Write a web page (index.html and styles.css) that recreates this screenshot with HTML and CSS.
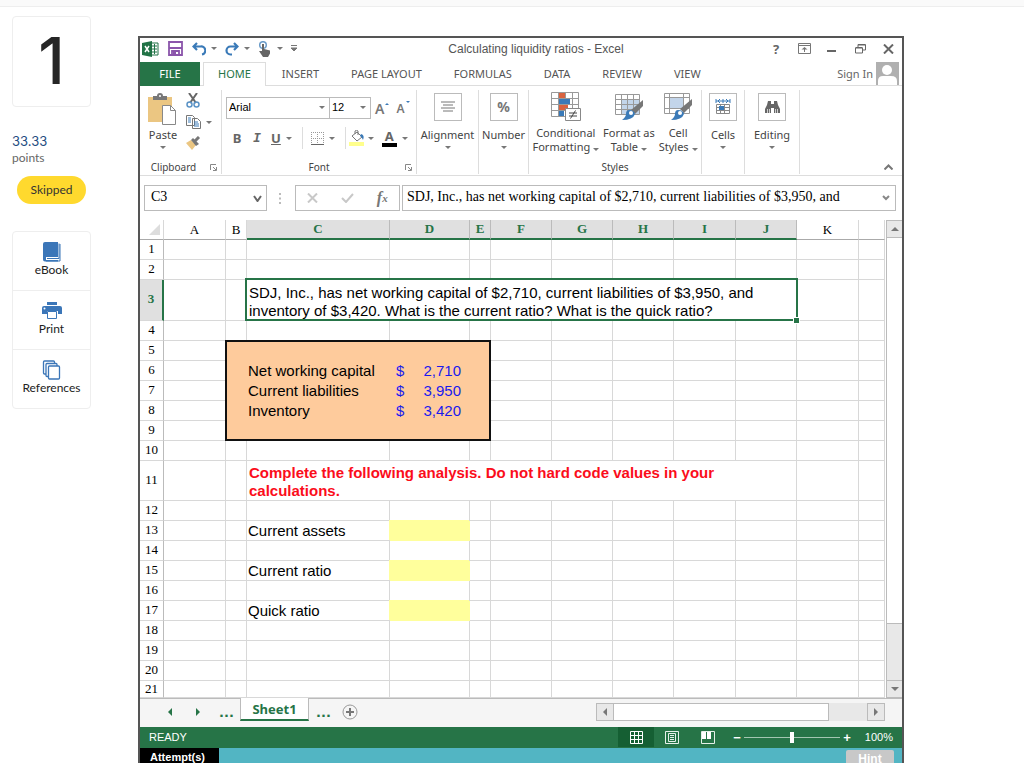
FILE: index.html
```html
<!DOCTYPE html>
<html lang="en">
<head>
  <meta charset="UTF-8">
  <meta name="viewport" content="width=device-width, initial-scale=1.0">
  <title>Calculating liquidity ratios</title>
  <link rel="stylesheet" href="styles.css">
</head>
<body>

<div class="top-strip"></div>

<div class="page">
  <aside class="sidebar">
    <div class="question-number">1</div>
    <div class="score">33.33</div>
    <div class="score-label">points</div>
    <div class="status-pill">Skipped</div>
    <nav class="tools">
      <a href="#ebook">
        <svg width="20" height="20" viewBox="0 0 20 20"><path d="M3 0h13v15H4v3h12v1.500H3A2 2 0 0 1 1 17.500V2a2 2 0 0 1 2-2z" fill="#3b76b8"/><path d="M5 16.500h12V1.500M18 2v17H4" fill="none" stroke="#3b76b8"/></svg>
        <span>eBook</span>
      </a>
      <a href="#print">
        <svg width="20" height="20" viewBox="0 0 20 20"><path d="M5 1h10v3H5zM2 5h16a2 2 0 0 1 2 2v6h-4v-3H5v3H0V7a2 2 0 0 1 2-2z" fill="#3b76b8"/><path d="M5.500 10.500h9v7h-9z" fill="#fff" stroke="#3b76b8"/><circle cx="2.500" cy="7.500" r="1" fill="#fff"/></svg>
        <span>Print</span>
      </a>
      <a href="#references">
        <svg width="20" height="20" viewBox="0 0 20 20" fill="#fff" stroke="#3b76b8" stroke-width="1.300"><rect x="1.500" y="1" width="11" height="13" rx="1"/><rect x="4" y="3.500" width="11" height="13" rx="1"/><rect x="6.500" y="6" width="11" height="13" rx="1"/></svg>
        <span>References</span>
      </a>
    </nav>
  </aside>

  <main class="excel">
    <header class="title-bar">
      <div class="quick-access">
        <svg width="17" height="16" viewBox="0 0 17 16"><path d="M9 2h7v12H9z" fill="#fff" stroke="#217346"/><path d="M10 5h5M10 8h5M10 11h5M12.500 3v10" stroke="#217346"/><path d="M0 2l10-2v16L0 14z" fill="#217346"/><path d="M3 5l4 6M7 5l-4 6" stroke="#fff" stroke-width="1.500"/></svg>
        <button class="save" aria-label="Save"><svg width="15" height="15" viewBox="0 0 15 15"><path d="M1 1h13v13H1zM4 14v-4h7v4M1 7h13" fill="none" stroke="#8b55ab" stroke-width="1.800"/><path d="M5 11h3v3H5z" fill="#8b55ab"/></svg></button>
        <button class="drop" aria-label="Undo"><svg width="14" height="14" viewBox="0 0 14 14"><path d="M5 1L1.500 4.500L5 8M2 4.500h6.500a4 4 0 0 1 1.500 8" fill="none" stroke="#3a7ab8" stroke-width="2.200"/></svg></button>
        <button class="drop" aria-label="Redo"><svg width="14" height="14" viewBox="0 0 14 14"><path d="M9 1l3.500 3.500L9 8M12 4.500H5.500a4 4 0 0 0 0 8H7" fill="none" stroke="#3a7ab8" stroke-width="2.200"/></svg></button>
        <button class="drop" aria-label="Touch mode"><svg width="14" height="16" viewBox="0 0 14 16"><circle cx="5" cy="4" r="3.300" fill="none" stroke="#6b9cc9" stroke-width="1.500"/><path d="M4 3h2v5l6 1.500v3L10 16H5L1 10h3z" fill="#666"/></svg></button>
        <button aria-label="Customize"><svg width="6" height="7" viewBox="0 0 6 7"><path d="M0 .5h6M0 3h6L3 6z" stroke="#777" fill="#777"/></svg></button>
      </div>
      <h1 class="title">Calculating liquidity ratios - Excel</h1>
      <div class="window-buttons">
        <button class="help" aria-label="Help">?</button>
        <button aria-label="Ribbon options"><svg width="13" height="11" viewBox="0 0 13 11"><path d="M.5.5h12v10H.5zM.5 2.500h12M6.500 9V5" fill="none" stroke="#777"/><path d="M3.500 6.500L6.500 4l3 2.500z" fill="#777"/></svg></button>
        <button aria-label="Minimize"><svg width="10" height="10" viewBox="0 0 10 10"><path d="M0 7h9" stroke="#666" stroke-width="2"/></svg></button>
        <button aria-label="Restore"><svg width="11" height="10" viewBox="0 0 11 10"><path d="M3 3V.5h7.500V6H8M.5 4H7.500v5H.5zM.5 3.500h7M3 1h7" fill="none" stroke="#666"/></svg></button>
        <button aria-label="Close"><svg width="11" height="10" viewBox="0 0 11 10"><path d="M1 .5l9 9M10 .5l-9 9" stroke="#666" stroke-width="2"/></svg></button>
      </div>
    </header>

    <nav class="tabs">
      <button class="tab file">FILE</button>
      <button class="tab active">HOME</button>
      <button class="tab">INSERT</button>
      <button class="tab">PAGE LAYOUT</button>
      <button class="tab">FORMULAS</button>
      <button class="tab">DATA</button>
      <button class="tab">REVIEW</button>
      <button class="tab">VIEW</button>
      <a class="sign-in" href="#signin">Sign In
        <svg width="23" height="23" viewBox="0 0 23 23"><path d="M0 0h23v23H0z" fill="#b0b0b0"/><circle cx="11" cy="8" r="5" fill="#fff"/><path d="M2 23v-4q0-5 5-5h8q6 0 6 5v4z" fill="#fff"/></svg>
      </a>
    </nav>

    <section class="ribbon">
      <div class="group clipboard">
        <div class="group-body">
          <button class="big paste">
            <svg width="30" height="32" viewBox="0 0 30 32"><path d="M0 4h24v25H0z" fill="#ebc682"/><path d="M5 7V3h4q0-3 3-3t3 3h4v4z" fill="#777"/><circle cx="12" cy="3" r="1" fill="#fff"/><path d="M14.500 12.500h8l5 5v14h-13z" fill="#fff" stroke="#888"/><path d="M22.500 12.500v5h5" fill="none" stroke="#888"/></svg>
            <span>Paste</span><i class="caret"></i>
          </button>
          <div class="small-col">
            <button aria-label="Cut"><svg width="14" height="15" viewBox="0 0 14 15"><path d="M3 0l7 10M11 0L4 10" stroke="#666" stroke-width="2"/><circle cx="3.500" cy="11.500" r="2.500" fill="none" stroke="#5b93c6" stroke-width="1.500"/><circle cx="10.500" cy="11.500" r="2.500" fill="none" stroke="#5b93c6" stroke-width="1.500"/></svg></button>
            <button class="drop" aria-label="Copy"><svg width="15" height="14" viewBox="0 0 15 14"><path d="M.5.500h6l2 2v8h-8zM6.500 3.500h5l3 3v7h-8z" fill="#fff" stroke="#777"/><path d="M2 3h3M2 5h3M2 7h3M8 7h4M8 9h5M8 11h5" stroke="#3a7ab8"/></svg></button>
            <button aria-label="Format painter"><svg width="15" height="14" viewBox="0 0 15 14"><path d="M0 7l5-3 5 5-4 5z" fill="#ebc682"/><path d="M5 4l2-2 6 6-3 2z" fill="#777"/><path d="M9 5l4-4" stroke="#777" stroke-width="3"/></svg></button>
          </div>
        </div>
        <div class="group-name">Clipboard <svg class="launcher" width="7" height="7" viewBox="0 0 7 7"><path d="M.5 6V.5H6M3 3l3 3M6.500 3v3.500H3" fill="none" stroke="#888"/></svg></div>
      </div>

      <div class="group font">
        <div class="group-body">
          <div class="font-row">
            <div class="pick family"><select aria-label="Font"><option>Arial</option></select></div>
            <div class="pick size"><select aria-label="Font size"><option>12</option></select></div>
            <button class="grow" aria-label="Increase font size">A<i class="up"></i></button>
            <button class="grow shrink" aria-label="Decrease font size">A<i class="down"></i></button>
          </div>
          <div class="font-row styles">
            <button class="bold">B</button>
            <button class="italic">I</button>
            <button class="underline drop"><u>U</u></button>
            <span class="divider"></span>
            <button class="drop" aria-label="Borders"><svg width="13" height="13" viewBox="0 0 13 13"><path d="M.5 0v12M6.500 0v12M12.500 0v12M0 .5h13M0 6.500h13" stroke="#999" stroke-dasharray="1 1"/><path d="M0 12.500h13" stroke="#666"/></svg></button>
            <span class="divider"></span>
            <button class="drop fill" aria-label="Fill colour"><svg width="16" height="16" viewBox="0 0 16 16"><path d="M0 12h15v4H0z" fill="#ffff8c"/><path d="M3 6l5-4 5 5-5 4zM6 4V1q1.500-1.500 3 0v4" fill="#fff" stroke="#777"/><path d="M12 4q4 1 2 6-1-3-3-4z" fill="#3a7ab8"/></svg></button>
            <button class="drop" aria-label="Font colour"><span class="font-colour">A</span></button>
          </div>
        </div>
        <div class="group-name">Font <svg class="launcher" width="7" height="7" viewBox="0 0 7 7"><path d="M.5 6V.5H6M3 3l3 3M6.500 3v3.500H3" fill="none" stroke="#888"/></svg></div>
      </div>

      <div class="group alignment">
        <button class="big">
          <span class="tile"><svg width="14" height="12" viewBox="0 0 14 12"><path d="M0 1h14M2 4h10M0 7h14M2 10h10" stroke="#777"/></svg></span>
          <span>Alignment</span><i class="caret"></i>
        </button>
      </div>

      <div class="group number">
        <button class="big">
          <span class="tile percent">%</span>
          <span>Number</span><i class="caret"></i>
        </button>
      </div>

      <div class="group cell-format">
        <div class="group-body">
          <button class="big two">
            <svg width="30" height="29" viewBox="0 0 30 29"><path d="M.5.500h27v24H.5zM.5 6.500h27M.5 12.500h27M.5 18.500h27M7.500 0v24M14.500 0v24M21.500 0v24" fill="#fff" stroke="#999"/><path d="M8 1h6v5H8zM8 13h9v5H8z" fill="#d9623f"/><path d="M8 7h11v5H8zM8 19h5v5H8z" fill="#3a7ab8"/><path d="M14.500 16.500h15v12h-15z" fill="#fff" stroke="#888"/><path d="M18 21h8M18 24h8M24.500 18.500l-5 8" stroke="#444"/></svg>
            <span>Conditional</span><span>Formatting <i class="caret"></i></span>
          </button>
          <button class="big two">
            <svg width="30" height="29" viewBox="0 0 30 29"><path d="M1.500 2.500h24v20h-24z" fill="#fff" stroke="#999"/><path d="M8 8h17v14H8z" fill="#c3d5ea"/><path d="M1.500 7.500h24M1.500 12.500h24M1.500 17.500h24M7.500 2v20M13.500 2v20M19.500 2v20" stroke="#999" fill="none"/><path d="M29 8v6l-8 8-4-4z" fill="#777"/><path d="M15 18q5 0 6 4-2 6-13 6 4-3 4-6 0-4 3-4z" fill="#3a7ab8"/><circle cx="17" cy="21" r="2" fill="#fff"/></svg>
            <span>Format as</span><span>Table <i class="caret"></i></span>
          </button>
          <button class="big two">
            <svg width="30" height="29" viewBox="0 0 30 29"><path d="M1.500 1.500h25v20h-25zM1.500 5.500h25M1.500 16.500h25M6.500 1v20M20.500 1v20" fill="#fff" stroke="#999"/><path d="M7 6h13v10H7z" fill="#c3d5ea"/><path d="M29 7v6l-8 8-4-4z" fill="#777"/><path d="M15 18q5 0 6 4-2 6-13 6 4-3 4-6 0-4 3-4z" fill="#3a7ab8"/><circle cx="17" cy="21" r="2" fill="#fff"/></svg>
            <span>Cell</span><span>Styles <i class="caret"></i></span>
          </button>
        </div>
        <div class="group-name">Styles</div>
      </div>

      <div class="group cells">
        <button class="big">
          <span class="tile"><svg width="16" height="16" viewBox="0 0 16 16"><path d="M1 0v4M15 0v4M1 2h14M5 0l-2 2 2 2M11 0l2 2-2 2M8 0v4" stroke="#3a7ab8" fill="none"/><path d="M1.500 5.500h13v9h-13zM1.500 8.500h13M1.500 11.500h13M5.500 5v9M9.500 5v9" fill="#fff" stroke="#888"/><path d="M4 7h5v4H4z" fill="#3a7ab8"/></svg></span>
          <span>Cells</span><i class="caret"></i>
        </button>
      </div>

      <div class="group editing">
        <button class="big">
          <span class="tile"><svg width="15" height="14" viewBox="0 0 15 14"><path d="M3 1h3v3h3V1h3l1 4 2 4v4H9V8H6v5H0V9l2-4z" fill="#666"/><path d="M2.500 9v4M4.500 9v4M10.500 9v4M12.500 9v4" stroke="#ccc"/></svg></span>
          <span>Editing</span><i class="caret"></i>
        </button>
      </div>
      <button class="collapse" aria-label="Collapse ribbon"><svg width="9" height="6" viewBox="0 0 9 6"><path d="M.5 5.500l4-4 4 4" fill="none" stroke="#777" stroke-width="2"/></svg></button>
    </section>

    <section class="formula-bar">
      <div class="name-box">
        <input type="text" value="C3" aria-label="Name box">
        <svg width="9" height="7" viewBox="0 0 9 7"><path d="M1 1l3.500 5L8 1" fill="none" stroke="#666" stroke-width="2"/></svg>
      </div>
      <svg class="dots" width="2" height="11" viewBox="0 0 2 11"><path d="M0 0h2v2H0zM0 4.500h2v2H0zM0 9h2v2H0z" fill="#bbb"/></svg>
      <div class="entry-buttons">
        <button aria-label="Cancel"><svg width="11" height="10" viewBox="0 0 11 10"><path d="M1 .5l9 9M10 .5l-9 9" stroke="#c8c8c8" stroke-width="2"/></svg></button>
        <button aria-label="Enter"><svg width="13" height="10" viewBox="0 0 13 10"><path d="M1 5l4 4 7-8" fill="none" stroke="#c8c8c8" stroke-width="2"/></svg></button>
        <button class="fx" aria-label="Insert function">f<sub>x</sub></button>
      </div>
      <div class="formula">
        <input type="text" value="SDJ, Inc., has net working capital of $2,710, current liabilities of $3,950, and" aria-label="Formula">
        <svg width="8" height="6" viewBox="0 0 8 6"><path d="M1 1l3 3 3-3" fill="none" stroke="#888" stroke-width="2"/></svg>
      </div>
    </section>

    <section class="sheet">
      <table class="grid">
        <colgroup>
          <col class="w-head"><col class="w-mid"><col class="w-narrow"><col class="w-c"><col class="w-d"><col class="w-narrow">
          <col class="w-std"><col class="w-std"><col class="w-std"><col class="w-mid"><col class="w-std"><col class="w-mid"><col>
        </colgroup>
        <thead>
          <tr>
            <th class="corner"><svg width="11" height="11" viewBox="0 0 11 11"><path d="M11 0v11H0z" fill="#ddd"/></svg></th>
            <th>A</th><th>B</th><th class="sel">C</th><th class="sel">D</th><th class="sel">E</th><th class="sel">F</th><th class="sel">G</th><th class="sel">H</th><th class="sel">I</th><th class="sel">J</th><th>K</th><th></th>
          </tr>
        </thead>
        <tbody>
          <tr><th>1</th><td></td><td></td><td></td><td></td><td></td><td></td><td></td><td></td><td></td><td></td><td></td><td></td></tr>
          <tr><th>2</th><td></td><td></td><td></td><td></td><td></td><td></td><td></td><td></td><td></td><td></td><td></td><td></td></tr>
          <tr class="tall-3"><th class="sel">3</th><td></td><td></td><td class="wrap selected" colspan="8">SDJ, Inc., has net working capital of $2,710, current liabilities of $3,950, and inventory of $3,420. What is the current ratio? What is the quick ratio?</td><td></td><td></td></tr>
          <tr><th>4</th><td></td><td></td><td></td><td></td><td></td><td></td><td></td><td></td><td></td><td></td><td></td><td></td></tr>
          <tr class="box-first"><th>5</th><td></td><td class="box left"></td><td class="box"></td><td class="box"></td><td class="box right"></td><td></td><td></td><td></td><td></td><td></td><td></td><td></td></tr>
          <tr><th>6</th><td></td><td class="box left"></td><td class="box">Net working capital</td><td class="box money"><span>$</span>2,710</td><td class="box right"></td><td></td><td></td><td></td><td></td><td></td><td></td><td></td></tr>
          <tr><th>7</th><td></td><td class="box left"></td><td class="box">Current liabilities</td><td class="box money"><span>$</span>3,950</td><td class="box right"></td><td></td><td></td><td></td><td></td><td></td><td></td><td></td></tr>
          <tr><th>8</th><td></td><td class="box left"></td><td class="box">Inventory</td><td class="box money"><span>$</span>3,420</td><td class="box right"></td><td></td><td></td><td></td><td></td><td></td><td></td><td></td></tr>
          <tr class="box-last"><th>9</th><td></td><td class="box left"></td><td class="box"></td><td class="box"></td><td class="box right"></td><td></td><td></td><td></td><td></td><td></td><td></td><td></td></tr>
          <tr><th>10</th><td></td><td></td><td></td><td></td><td></td><td></td><td></td><td></td><td></td><td></td><td></td><td></td></tr>
          <tr class="tall-11"><th>11</th><td></td><td></td><td class="wrap notice" colspan="8">Complete the following analysis. Do not hard code values in your calculations.</td><td></td><td></td></tr>
          <tr><th>12</th><td></td><td></td><td></td><td></td><td></td><td></td><td></td><td></td><td></td><td></td><td></td><td></td></tr>
          <tr><th>13</th><td></td><td></td><td><label for="assets">Current assets</label></td><td class="answer"><input id="assets" type="text"></td><td></td><td></td><td></td><td></td><td></td><td></td><td></td><td></td></tr>
          <tr><th>14</th><td></td><td></td><td></td><td></td><td></td><td></td><td></td><td></td><td></td><td></td><td></td><td></td></tr>
          <tr><th>15</th><td></td><td></td><td><label for="current">Current ratio</label></td><td class="answer"><input id="current" type="text"></td><td></td><td></td><td></td><td></td><td></td><td></td><td></td><td></td></tr>
          <tr><th>16</th><td></td><td></td><td></td><td></td><td></td><td></td><td></td><td></td><td></td><td></td><td></td><td></td></tr>
          <tr><th>17</th><td></td><td></td><td><label for="quick">Quick ratio</label></td><td class="answer"><input id="quick" type="text"></td><td></td><td></td><td></td><td></td><td></td><td></td><td></td><td></td></tr>
          <tr><th>18</th><td></td><td></td><td></td><td></td><td></td><td></td><td></td><td></td><td></td><td></td><td></td><td></td></tr>
          <tr><th>19</th><td></td><td></td><td></td><td></td><td></td><td></td><td></td><td></td><td></td><td></td><td></td><td></td></tr>
          <tr><th>20</th><td></td><td></td><td></td><td></td><td></td><td></td><td></td><td></td><td></td><td></td><td></td><td></td></tr>
          <tr class="cut"><th>21</th><td></td><td></td><td></td><td></td><td></td><td></td><td></td><td></td><td></td><td></td><td></td><td></td></tr>
        </tbody>
      </table>
      <div class="v-scroll">
        <button aria-label="Scroll up"><i class="tri up"></i></button>
        <div class="thumb"></div>
        <div class="track"></div>
        <button aria-label="Scroll down"><i class="tri down"></i></button>
      </div>
    </section>

    <section class="sheet-bar">
      <div class="sheet-nav">
        <button aria-label="Previous sheet"><i class="tri left"></i></button>
        <button aria-label="Next sheet"><i class="tri right"></i></button>
        <span class="more">...</span>
      </div>
      <button class="sheet-tab">Sheet1</button>
      <span class="more">...</span>
      <button class="add-sheet" aria-label="New sheet"><svg width="16" height="16" viewBox="0 0 16 16"><circle cx="8" cy="8" r="7" fill="none" stroke="#999"/><path d="M4 8h8M8 4v8" stroke="#777" stroke-width="2"/></svg></button>
      <div class="h-scroll">
        <button aria-label="Scroll left"><i class="tri left"></i></button>
        <div class="thumb"></div>
        <div class="track"></div>
        <button aria-label="Scroll right"><i class="tri right"></i></button>
      </div>
    </section>

    <footer class="status-bar">
      <span class="ready">READY</span>
      <button class="view on" aria-label="Normal view"><svg width="13" height="13" viewBox="0 0 13 13"><path d="M.5.500h12v12H.5zM4.500 0v13M8.500 0v13M0 4.500h13M0 8.500h13" fill="none" stroke="#fff"/></svg></button>
      <button class="view" aria-label="Page layout view"><svg width="14" height="13" viewBox="0 0 14 13"><path d="M.5.500h13v12H.5zM3.500 2.500h7v8h-7zM5 4.500h4M5 6.500h4M5 8.500h4" fill="none" stroke="#e5f0e9"/></svg></button>
      <button class="view" aria-label="Page break view"><svg width="14" height="13" viewBox="0 0 14 13"><path d="M.5.500h13v12H.5z" fill="none" stroke="#e5f0e9"/><path d="M1 1h4v7H1zM6 1h4v7H6z" fill="#fff"/></svg></button>
      <span class="zoom-sign">−</span>
      <input class="zoom" type="range" min="0" max="100" value="50" aria-label="Zoom">
      <span class="zoom-sign">+</span>
      <span class="zoom-value">100%</span>
    </footer>

    <div class="attempts">
      <span class="attempts-label">Attempt(s)</span>
      <button class="hint">Hint</button>
    </div>
  </main>
</div>

</body>
</html>
```
FILE: styles.css
```css
* {
  box-sizing: border-box;
}

body {
  margin: 0;
  background: #fff;
  font-family: "Noto Sans", "Open Sans", sans-serif;
  font-size: 11px;
  color: #444;
}

button {
  display: flex;
  align-items: center;
  justify-content: center;
  padding: 0;
  border: 0;
  background: none;
  font: inherit;
  color: inherit;
}

input,
select {
  border: 0;
  padding: 0;
  margin: 0;
  background: none;
  font: inherit;
  color: inherit;
}

svg {
  display: block;
  flex: none;
}

.top-strip {
  height: 7px;
  background: #fafafa;
  border-bottom: 1px solid #eee;
}

.page {
  display: flex;
  align-items: flex-start;
  padding: 9px 120px 9px 12px;
}

/* Sidebar */
.sidebar {
  width: 79px;
  flex: none;
  font-family: Lato, sans-serif;
  color: #333;
}

.question-number {
  height: 91px;
  border: 1px solid #eee;
  border-radius: 4px;
  font-family: Inter, sans-serif;
  font-size: 64px;
  font-weight: 500;
  line-height: 87px;
  text-align: center;
  color: #262626;
}

.score {
  margin-top: 25px;
  font-family: Inter, sans-serif;
  font-size: 13px;
  line-height: 18px;
  color: #1f4e82;
}

.score-label {
  font-size: 12px;
  line-height: 16px;
  color: #666;
}

.status-pill {
  margin: 10px 5px 27px;
  border-radius: 14px;
  background: #ffd92e;
  font-size: 12px;
  line-height: 28px;
  text-align: center;
}

.tools {
  border: 1px solid #eee;
  border-radius: 4px;
}

.tools a {
  display: flex;
  flex-direction: column;
  align-items: center;
  height: 58px;
  padding-top: 10px;
  font-size: 12px;
  line-height: 16px;
  color: #222;
  text-decoration: none;
}

.tools a + a {
  height: 59px;
  border-top: 1px solid #eee;
}

/* Window */
.excel {
  flex: 1;
  min-width: 0;
  margin: 20px 0 0 47px;
  border: 2px solid #555;
  border-bottom: 0;
}

.title-bar {
  display: flex;
  align-items: center;
  height: 24px;
  padding-bottom: 3px;
}

.quick-access {
  display: flex;
  align-items: center;
  gap: 8px;
  width: 170px;
  padding-left: 2px;
}

.title {
  flex: 1;
  margin: 0;
  font: 12px "Liberation Sans", sans-serif;
  text-align: center;
  color: #555;
}

.window-buttons {
  display: flex;
  width: 140px;
}

.window-buttons button {
  width: 28px;
  height: 20px;
}

.help {
  font-size: 13px;
  font-weight: bold;
  color: #666;
}

.drop {
  gap: 5px;
}

.caret,
.drop::after,
.pick::after {
  content: "";
  display: inline-block;
  border: 3px solid transparent;
  border-top-color: #777;
  border-bottom: 0;
}

.save {
  margin: 0 1px;
}

/* Ribbon tabs */
.tabs {
  display: flex;
  height: 24px;
  box-shadow: inset 0 -1px #ddd;
}

.tab {
  padding: 0 16px 1px;
  color: #555;
}

.tab.file {
  width: 60px;
  margin-right: 3px;
  background: #267447;
  color: #fff;
}

.tab.active {
  padding: 0 14px 2px;
  border: 1px solid #ddd;
  border-bottom: 0;
  background: #fff;
  color: #267447;
}

.sign-in {
  display: flex;
  align-items: center;
  gap: 3px;
  margin-left: auto;
  padding: 0 3px 1px 0;
  color: #666;
  text-decoration: none;
}

/* Ribbon */
.ribbon {
  display: flex;
  height: 90px;
  padding: 4px 0 1px;
  border-bottom: 1px solid #ddd;
}

.group {
  display: flex;
  flex-direction: column;
  border-right: 1px solid #ddd;
}

.group-body {
  display: flex;
  height: 70px;
}

.group-name {
  display: flex;
  align-items: center;
  justify-content: center;
  position: relative;
  font-size: 10px;
  line-height: 14px;
}

.clipboard .group-name {
  padding-right: 14px;
}

.launcher {
  position: absolute;
  right: 4px;
}

.big {
  flex-direction: column;
  justify-content: flex-start;
  padding-top: 3px;
  line-height: 14px;
}

.tile {
  display: flex;
  align-items: center;
  justify-content: center;
  width: 28px;
  height: 28px;
  margin-bottom: 7px;
  border: 1px solid #bbb;
}

.percent {
  font-size: 14px;
  font-weight: bold;
  color: #777;
}

.big > .caret {
  margin-top: 4px;
}

.two {
  padding-top: 2px;
}

.two svg {
  margin-bottom: 5px;
}

.clipboard {
  width: 82px;
}

.paste {
  width: 46px;
}

.paste span {
  margin-top: 3px;
}

.small-col {
  display: flex;
  flex-direction: column;
  align-items: flex-start;
  gap: 7px;
  padding-top: 3px;
}

.font {
  width: 195px;
}

.font .group-body {
  flex-direction: column;
  gap: 8px;
  padding: 7px 4px 0;
}

.font-row {
  display: flex;
  align-items: center;
  height: 22px;
}

.pick {
  display: flex;
  align-items: center;
  height: 22px;
  padding: 0 4px 2px 2px;
  border: 1px solid #bbb;
}

.pick select {
  flex: 1;
  min-width: 0;
  appearance: none;
  font: 11px "Liberation Sans", sans-serif;
  color: #000;
}

.family {
  width: 104px;
}

.size {
  width: 41px;
  border-left: 0;
}

.grow {
  gap: 1px;
  margin-left: 4px;
  font-size: 14px;
  font-weight: 600;
  color: #777;
}

.shrink {
  margin-left: 7px;
  font-size: 12px;
}

.grow i {
  margin-top: -10px;
  border: 2px solid transparent;
}

.grow .up {
  border-bottom-color: #3a7ab8;
}

.grow .down {
  border-top-color: #3a7ab8;
}

.styles {
  gap: 8px;
  padding-left: 5px;
  font-size: 13px;
  color: #666;
}

.bold,
.underline,
.font-colour {
  font-weight: bold;
}

.bold,
.italic {
  width: 12px;
}

.italic {
  font-family: "Liberation Mono", monospace;
  font-style: italic;
  font-weight: bold;
}

.divider {
  width: 1px;
  height: 22px;
  margin-left: 2px;
  background: #ddd;
}

.fill {
  gap: 3px;
  margin-left: -5px;
}

.font-colour {
  width: 15px;
  border-bottom: 4px solid #000;
  font-size: 13px;
  line-height: 13px;
}

.alignment {
  width: 62px;
}

.number {
  width: 50px;
}

.cell-format {
  width: 173px;
}

.cell-format .group-body {
  justify-content: center;
  gap: 4px;
}

.cells {
  width: 43px;
}

.editing {
  width: 55px;
}

.collapse {
  align-self: flex-end;
  margin: 0 9px 4px auto;
}

/* Formula bar */
.formula-bar {
  display: flex;
  align-items: center;
  height: 44px;
  padding: 0 6px 0 4px;
  font: 14px "Liberation Serif", serif;
  color: #000;
}

.name-box,
.entry-buttons,
.formula {
  display: flex;
  align-items: center;
  height: 26px;
  border: 1px solid #bbb;
}

.name-box {
  width: 123px;
  padding: 0 4px 0 6px;
}

.name-box input,
.formula input {
  flex: 1;
  min-width: 0;
  padding-bottom: 2px;
}

.dots {
  margin: 0 14px 0 12px;
}

.entry-buttons {
  justify-content: space-around;
  width: 105px;
  margin-right: 2px;
}

.fx {
  font-size: 16px;
  font-style: italic;
  font-weight: bold;
  color: #777;
}

.fx sub {
  font-size: 11px;
}

.formula {
  flex: 1;
  padding: 0 5px 0 4px;
}

/* Cells */
.sheet {
  display: flex;
}

.grid {
  flex: 1;
  min-width: 0;
  width: 100%;
  table-layout: fixed;
  border-spacing: 0;
  font: 15px "Liberation Sans", sans-serif;
  color: #000;
}

.w-head { width: 24px; }
.w-narrow { width: 21px; }
.w-std { width: 61px; }
.w-mid { width: 62px; }
.w-c { width: 143px; }
.w-d { width: 80px; }

.grid tr {
  height: 20px;
}

.grid .tall-3 {
  height: 41px;
}

.grid .tall-11 {
  height: 40px;
}

.grid .cut {
  height: 17px;
}

.grid th,
.grid td {
  padding: 0;
  border-right: 1px solid #d8d8d8;
  border-bottom: 1px solid #d8d8d8;
  line-height: 16px;
}

.grid td {
  padding-left: 1px;
  white-space: nowrap;
}

.grid th {
  font-family: "Liberation Serif", serif;
  font-size: 13px;
  font-weight: normal;
}

.grid thead th {
  border-bottom-color: #aaa;
}

.grid tbody th {
  padding-bottom: 2px;
  border-right-color: #bbb;
}

.grid .cut th {
  padding-bottom: 0;
}

.grid .corner svg {
  margin-left: 9px;
}

.grid th.sel {
  background: #e0e0e0;
  color: #267447;
  font-weight: bold;
}

.grid thead th.sel {
  border-right-color: #bbb;
  border-bottom: 2px solid #267447;
}

.grid tbody th.sel {
  border-right: 2px solid #267447;
}

.grid td.wrap {
  padding-left: 2px;
  line-height: 18px;
  vertical-align: bottom;
  white-space: normal;
}

.selected {
  position: relative;
}

/* Outline and fill handle of the current selection */
.selected::before {
  content: "";
  position: absolute;
  inset: -2px -2px -1px;
  border: 2px solid #267447;
}

.selected::after {
  content: "";
  position: absolute;
  right: -3px;
  bottom: -3px;
  width: 5px;
  height: 5px;
  background: #267447;
  outline: 1px solid #fff;
}

.grid .notice {
  font-weight: bold;
  color: #fb0d1b;
}

/* Given data, one black frame round the whole block */
.grid .box {
  padding-bottom: 1px;
  border: 0 solid #111;
  background: #fecb9c;
}

.grid .box.left {
  border-left-width: 1px;
  box-shadow: -1px 0 #111;
}

.grid .box.right {
  border-right-width: 2px;
}

.grid .box-first .box {
  border-top-width: 1px;
  box-shadow: 0 -1px #111;
}

.grid .box-first .box.left {
  box-shadow: -1px 0 #111, 0 -1px #111, -1px -1px #111;
}

.grid .box-last .box {
  border-bottom-width: 2px;
}

.grid .money {
  padding: 0 9px 1px 6px;
  text-align: right;
  color: #1a1aee;
}

.money span {
  float: left;
}

.grid .answer {
  border-color: #ffff9c;
  background: #ffff9c;
  box-shadow: -1px -1px #ffff9c;
}

.answer input {
  display: block;
  width: 100%;
  height: 16px;
}

/* Scroll bars */
.v-scroll {
  display: flex;
  flex-direction: column;
  flex: none;
  width: 16px;
  margin-left: 1px;
  border-left: 1px solid #bbb;
}

.v-scroll button,
.h-scroll button {
  width: 18px;
  height: 18px;
  border: 1px solid #bbb;
  background: #e8e8e8;
}

.v-scroll button {
  width: 100%;
  border-width: 1px 0;
}

.thumb {
  background: #fff;
}

.track {
  flex: 1;
  background: #e8e8e8;
}

.v-scroll .thumb {
  height: 386px;
  border-bottom: 1px solid #bbb;
}

.tri {
  border: 4px solid transparent;
}

.tri.up { border-bottom-color: #777; border-top: 0; }
.tri.down { border-top-color: #777; border-bottom: 0; }
.tri.left { border-right-color: #777; border-left: 0; }
.tri.right { border-left-color: #777; border-right: 0; }

/* Sheet tabs */
.sheet-bar {
  display: flex;
  align-items: center;
  height: 29px;
  padding-bottom: 2px;
  border-top: 1px solid #bbb;
  background: #f5f5f5;
  color: #267447;
}

.sheet-nav {
  display: flex;
  align-items: center;
  gap: 24px;
  width: 100px;
  padding-left: 28px;
}

.sheet-nav .tri.left { border-right-color: #267447; }
.sheet-nav .tri.right { border-left-color: #267447; }

.more {
  font: bold 13px "DejaVu Sans", sans-serif;
}

.sheet-nav .more {
  margin-left: -5px;
}

.sheet-tab {
  align-self: flex-start;
  width: 69px;
  height: 23px;
  margin: -1px 7px 0 0;
  border: 1px solid #bbb;
  border-top: 0;
  border-bottom: 2px solid #267447;
  background: #fff;
  font-size: 13px;
  font-weight: bold;
}

.add-sheet {
  margin-left: 11px;
}

.h-scroll {
  display: flex;
  width: 289px;
  margin-left: auto;
  margin-right: 17px;
}

.h-scroll .thumb {
  width: 215px;
  border: 1px solid #bbb;
  border-left: 0;
}

/* Status bar */
.status-bar {
  display: flex;
  align-items: center;
  height: 21px;
  padding: 0 9px 1px;
  background: #267447;
  font: 11px "Liberation Sans", sans-serif;
  color: #fff;
}

.ready {
  margin-right: auto;
}

.view {
  width: 36px;
  height: 20px;
}

.view.on {
  background: #155f33;
}

.zoom-sign {
  width: 14px;
  font-size: 13px;
  font-weight: bold;
  text-align: center;
}

.view + .zoom-sign {
  margin-left: 4px;
}

.zoom {
  width: 96px;
  height: 12px;
  appearance: none;
  background: linear-gradient(#a3c6b1, #a3c6b1) center / 100% 1px no-repeat;
}

.zoom::-webkit-slider-thumb {
  appearance: none;
  width: 4px;
  height: 11px;
  background: #fff;
}

.zoom-value {
  width: 39px;
  text-align: right;
}

/* Attempts strip, cut off by the viewer */
.attempts {
  display: flex;
  align-items: flex-start;
  justify-content: space-between;
  height: 15px;
  padding-right: 8px;
  overflow: hidden;
  background: #52b5c3;
  font: bold 11px "Liberation Sans", sans-serif;
  color: #fff;
}

.attempts-label {
  padding: 0 14px 0 10px;
  background: #000;
  line-height: 18px;
}

.hint {
  width: 48px;
  height: 18px;
  margin-top: 2px;
  border-radius: 2px;
  background: #c8c8c8;
  font-size: 12px;
}
```
